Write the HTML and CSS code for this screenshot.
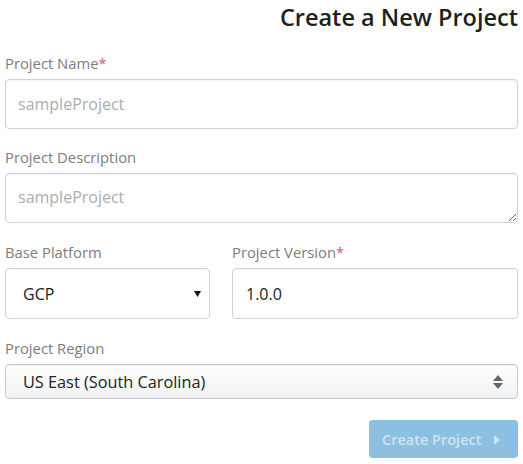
FILE: index.html
```html
<!DOCTYPE html>
<html>
<head>
<meta charset="utf-8">
<link rel="stylesheet" href="styles.css">
</head>
<body>
<div class="page">
  <h1 class="title">Create a New Project</h1>
  <form class="form">
    <div class="group first">
      <label class="label">Project Name<span class="req">*</span></label>
      <input class="control" type="text" placeholder="sampleProject">
    </div>
    <div class="group">
      <label class="label">Project Description</label>
      <textarea class="control area" placeholder="sampleProject"></textarea>
    </div>
    <div class="row">
      <div class="group">
        <label class="label">Base Platform</label>
        <div class="control select">
          <span class="value">GCP</span>
          <svg class="caret" width="7" height="6" viewBox="0 0 7 6"><path d="M0 0h7L3.5 6z" fill="#111"/></svg>
        </div>
      </div>
      <div class="group">
        <label class="label">Project Version<span class="req">*</span></label>
        <div class="control version"><span class="value">1.0.0</span></div>
      </div>
    </div>
    <div class="group last">
      <label class="label">Project Region</label>
      <div class="control region">
        <span class="value">US East (South Carolina)</span>
        <svg class="updown" width="10" height="14" viewBox="0 0 10 14"><path d="M5 0L10 6H0z M0 8h10L5 14z" fill="#5f6670"/></svg>
      </div>
    </div>
    <div class="actions">
      <button type="button" class="btn"><span>Create Project</span><svg class="play" width="6" height="10" viewBox="0 0 6 10"><path d="M0 0L6 5L0 10z" fill="#cfe4f3"/></svg></button>
    </div>
  </form>
</div>
</body>
</html>
```
FILE: styles.css
```css
* { box-sizing: border-box; }
html, body { margin: 0; padding: 0; background: #fff; }
body { font-family: "Open Sans", "Noto Sans", sans-serif; color: #222; }
.page { padding: 0 5px; }
.title {
  margin: 0;
  padding-top: 2px;
  height: 53px;
  text-align: right;
  font-size: 23.5px;
  font-weight: 600;
  color: #1f1f1f;
  line-height: 30px;
}
.group { margin-bottom: 19px; display: flex; flex-direction: column; }
.group.first { margin-bottom: 18px; }
.group.last { margin-bottom: 0; }
.label {
  display: block;
  font-size: 14.8px;
  line-height: 20px;
  color: #7d7d7d;
  margin-bottom: 6px;
}
.req { color: #e0556a; }
.control {
  height: 50px;
  width: 100%;
  border: 1px solid #d2d2d2;
  border-radius: 4px;
  box-shadow: inset 0 1px 1px rgba(0,0,0,0.04);
  font-family: "Open Sans", "Noto Sans", sans-serif;
  font-size: 16px;
  color: #222;
  padding: 0 12px;
  background: #fff;
  outline: none;
  margin: 0;
}
.control::placeholder { color: #adadad; }
.area { display: block; resize: vertical; padding-top: 12px; line-height: 22px; }
.row { display: grid; grid-template-columns: 205px 1fr; column-gap: 22px; }
.row .control { height: 51px; }
.select { display: flex; align-items: center; justify-content: space-between; padding: 0 8px 0 17px; }
.version { display: flex; align-items: center; padding-left: 13px; }
.region {
  height: 35px;
  font-size: 16.3px;
  display: flex; align-items: center; justify-content: space-between;
  padding: 0 14px 0 17px;
  background: linear-gradient(#fdfdfd, #f1f2f3);
  border-color: #c9c9c9;
}
.actions { display: flex; justify-content: flex-end; margin-top: 21px; }
.btn {
  width: 149px; height: 38px;
  border: 0; border-radius: 4px;
  background: #8cbfe0;
  color: #cfe4f3;
  font-family: "Open Sans", "Noto Sans", sans-serif;
  font-size: 14.5px; font-weight: 600;
  display: flex; align-items: center; justify-content: flex-start;
  padding: 0 0 0 13px;
  gap: 13px;
}
.play { margin-top: 1px; }
```
